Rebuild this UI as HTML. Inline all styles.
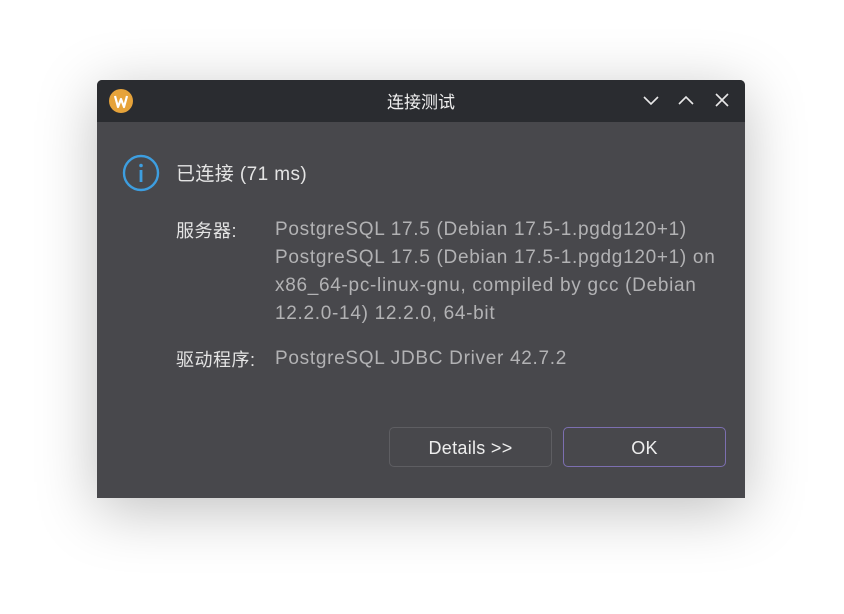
<!DOCTYPE html>
<html><head><meta charset="utf-8"><style>
html,body{margin:0;padding:0;width:844px;height:614px;background:#fff;overflow:hidden}
body{font-family:"Liberation Sans","Noto Sans CJK SC",sans-serif;position:relative}
.win{position:absolute;left:97px;top:80px;width:648px;height:418px;background:#48484c;border-radius:5px 5px 0 0;box-shadow:0 12px 60px rgba(0,0,0,0.25);overflow:hidden}
.tb{position:absolute;left:0;top:0;width:648px;height:42px;background:#2a2c30}
.title{position:absolute;left:0;width:648px;top:8px;text-align:center;color:#f0f0f0;font-size:17px}
.t{position:absolute;white-space:nowrap;font-size:19px;letter-spacing:0.7px}
.lab{color:#e4e4e4;font-size:18px;letter-spacing:0.5px}
.val{color:#b2b2b4;line-height:28px}
.btn{position:absolute;top:347px;height:40px;border-radius:5px;box-sizing:border-box;color:#eee;font-size:18px;text-align:center;line-height:40px;letter-spacing:0.3px}
</style></head><body>
<div class="win">
 <div class="tb">
  <svg style="position:absolute;left:12px;top:9px" width="24" height="24"><circle cx="12" cy="12" r="12" fill="#e6a33a"/><path d="M6 7 L9 18 L12 10 L15 18 L18 7" stroke="#fff" stroke-width="2.2" fill="none" stroke-linejoin="round"/></svg>
  <div class="title">连接测试</div>
  <svg style="position:absolute;left:545px;top:13px" width="100" height="16" stroke="#e8e8e8" stroke-width="1.6" fill="none">
   <path d="M2 4 L9 11 L16 4"/><path d="M37 11 L44 4 L51 11"/><path d="M74 1 L86 13 M86 1 L74 13"/>
  </svg>
 </div>
 <svg style="position:absolute;left:25px;top:74px" width="38" height="38"><circle cx="19" cy="19" r="17" fill="none" stroke="#3d9ee0" stroke-width="2.4"/><rect x="17.6" y="16" width="2.8" height="12" fill="#3d9ee0"/><circle cx="19" cy="11.5" r="1.8" fill="#3d9ee0"/></svg>
 <div class="t lab" style="left:79px;top:79px;font-size:19px;letter-spacing:0.4px">已连接 (71 ms)</div>
 <div class="t lab" style="left:79px;top:137px">服务器:</div>
 <div class="t val" style="left:178px;top:136px">PostgreSQL 17.5 (Debian 17.5-1.pgdg120+1)<br>PostgreSQL 17.5 (Debian 17.5-1.pgdg120+1) on<br>x86_64-pc-linux-gnu, compiled by gcc (Debian<br>12.2.0-14) 12.2.0, 64-bit</div>
 <div class="t lab" style="left:79px;top:266px">驱动程序:</div>
 <div class="t val" style="left:178px;top:265px">PostgreSQL JDBC Driver 42.7.2</div>
 <div class="btn" style="left:292px;width:163px;border:1px solid #5e5e62">Details &gt;&gt;</div>
 <div class="btn" style="left:466px;width:163px;border:1px solid #7c6fb0">OK</div>
</div>
</body></html>
